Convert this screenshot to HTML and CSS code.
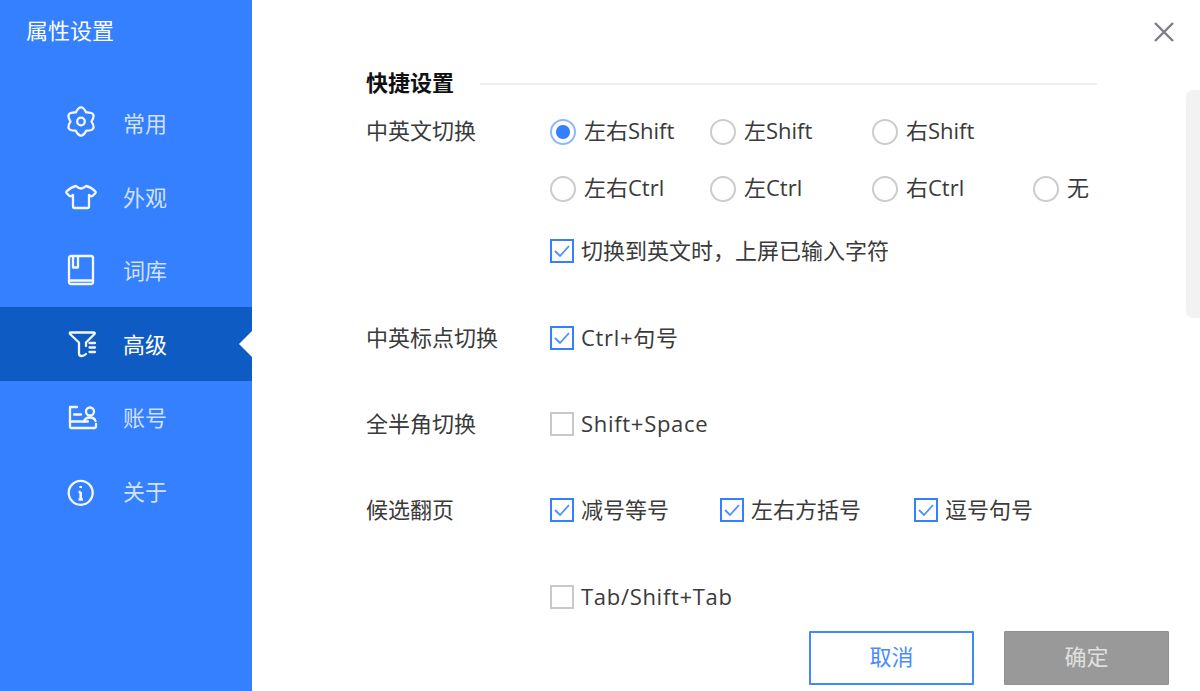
FILE: index.html
```html
<!DOCTYPE html>
<html lang="zh-CN">
<head>
<meta charset="utf-8">
<title>属性设置</title>
<link rel="stylesheet" href="styles.css">
</head>
<body>
<div class="window">
  <aside class="sidebar">
    <h1 class="app-title">属性设置</h1>
    <nav class="menu">
      <a class="menu-item">
        <svg class="menu-icon" viewBox="0 0 30 30"><path d="M9.750 4.400Q15 -5.500 20.250 4.400Q31.450 4 25.500 13.500Q31.450 23 20.250 22.600Q15 32.500 9.750 22.600Q-1.450 23 4.500 13.500Q-1.450 4 9.750 4.400Z"/><circle cx="15" cy="13.500" r="3.800"/></svg>
        <span>常用</span>
      </a>
      <a class="menu-item">
        <svg class="menu-icon" viewBox="0 0 30 30"><path d="M10 4Q15 9 20 4Q25 5 29.500 9.500Q30 10.500 29.500 11L26.500 14Q25.500 14.500 24.500 14L23 13V24.500Q23 26 21.500 26H8.500Q7 26 7 24.500V13L5.500 14Q4.500 14.500 3.500 14L.5 11Q0 10.500 .5 9.500Q5 5 10 4Z"/></svg>
        <span>外观</span>
      </a>
      <a class="menu-item">
        <svg class="menu-icon" viewBox="0 0 30 30"><rect x="3" y="1" width="24" height="28" rx="2"/><path d="M7 1.500V12.500H12V1.500M3 25.500H27"/></svg>
        <span>词库</span>
      </a>
      <a class="menu-item is-active">
        <svg class="menu-icon" viewBox="0 0 30 30"><path d="M5 3.500H27.500Q29.500 3.500 28.500 5L20 13.500V17M5 3.500Q3 3.500 4 5L13 13.500V24.500Q13 27 15.500 27Q18 27 20 25"/><path d="M23.500 14H29M23.500 18.500H29M23.500 23H29"/></svg>
        <span>高级</span>
      </a>
      <a class="menu-item">
        <svg class="menu-icon" viewBox="0 0 30 30"><path d="M11 5H4V25Q4 26 5 26H28.500Q30 26 30 24V22"/><path d="M8 12.500H15M4 19.500H22"/><circle cx="24" cy="9.500" r="4"/><path d="M18 19.500Q19 15.500 24 15.500Q28.500 15.500 29.500 19"/></svg>
        <span>账号</span>
      </a>
      <a class="menu-item">
        <svg class="menu-icon" viewBox="0 0 30 30"><circle cx="14.700" cy="16.800" r="12"/><path class="icon-bold" d="M14.700 16V23.500M12.500 16H14.700M12.500 23.500H16.900M14.700 10V12"/></svg>
        <span>关于</span>
      </a>
    </nav>
  </aside>

  <main class="content">
    <div class="section-head">
      <h2 class="section-title">快捷设置</h2>
      <div class="section-rule"></div>
    </div>

    <section class="setting setting-first">
      <div class="setting-label">中英文切换</div>
      <div class="setting-body">
        <div class="radio-grid">
          <label class="radio is-checked"><i class="radio-mark"></i>左右Shift</label>
          <label class="radio"><i class="radio-mark"></i>左Shift</label>
          <label class="radio"><i class="radio-mark"></i>右Shift</label>
          <span></span>
          <label class="radio"><i class="radio-mark"></i>左右Ctrl</label>
          <label class="radio"><i class="radio-mark"></i>左Ctrl</label>
          <label class="radio"><i class="radio-mark"></i>右Ctrl</label>
          <label class="radio"><i class="radio-mark"></i>无</label>
        </div>
        <div class="check-line check-line-sub">
          <label class="check"><svg class="check-box is-on" viewBox="0 0 20 20"><path d="M3 10l5 5 9-10"/></svg>切换到英文时，上屏已输入字符</label>
        </div>
      </div>
    </section>

    <section class="setting">
      <div class="setting-label">中英标点切换</div>
      <div class="setting-body">
        <div class="check-line">
          <label class="check check-latin"><svg class="check-box is-on" viewBox="0 0 20 20"><path d="M3 10l5 5 9-10"/></svg>Ctrl+句号</label>
        </div>
      </div>
    </section>

    <section class="setting">
      <div class="setting-label">全半角切换</div>
      <div class="setting-body">
        <div class="check-line">
          <label class="check check-latin"><svg class="check-box" viewBox="0 0 20 20"></svg>Shift+Space</label>
        </div>
      </div>
    </section>

    <section class="setting">
      <div class="setting-label">候选翻页</div>
      <div class="setting-body">
        <div class="check-line check-line-multi">
          <label class="check"><svg class="check-box is-on" viewBox="0 0 20 20"><path d="M3 10l5 5 9-10"/></svg>减号等号</label>
          <label class="check"><svg class="check-box is-on" viewBox="0 0 20 20"><path d="M3 10l5 5 9-10"/></svg>左右方括号</label>
          <label class="check"><svg class="check-box is-on" viewBox="0 0 20 20"><path d="M3 10l5 5 9-10"/></svg>逗号句号</label>
        </div>
        <div class="check-line check-line-next">
          <label class="check check-latin"><svg class="check-box" viewBox="0 0 20 20"></svg>Tab/Shift+Tab</label>
        </div>
      </div>
    </section>
  </main>

  <button class="close" type="button" aria-label="关闭">
    <svg viewBox="0 0 20 20"><path d="M1 1l18 18M19 1l-18 18"/></svg>
  </button>
  <div class="scrollbar"></div>
  <footer class="actions">
    <button class="btn btn-cancel" type="button">取消</button>
    <button class="btn btn-ok" type="button">确定</button>
  </footer>
</div>
</body>
</html>
```
FILE: styles.css
```css
* { box-sizing: border-box; }
html, body { margin: 0; height: 100%; }
body {
  font-family: "Open Sans", "Noto Sans CJK SC", sans-serif;
  font-size: 22px;
  color: #3a3a3a;
  background: #fff;
  overflow: hidden;
}
.window {
  position: relative;
  display: flex;
  width: 1200px;
  height: 691px;
  overflow: hidden;
}

/* sidebar */
.sidebar {
  flex: 0 0 252px;
  background: #3480ff;
  color: #fff;
}
.app-title {
  margin: 0;
  padding: 15px 0 0 26px;
  font-size: 22px;
  line-height: 30px;
  font-weight: 400;
}
.menu {
  display: flex;
  flex-direction: column;
  margin-top: 41.500px;
}
.menu-item {
  position: relative;
  display: flex;
  align-items: center;
  gap: 27px;
  height: 73.5px;
  padding-left: 66px;
  color: rgba(255, 255, 255, .78);
}
.menu-item span { line-height: 30px; }
.menu-icon {
  width: 30px;
  height: 30px;
  overflow: visible;
  fill: none;
  stroke: #fff;
  stroke-width: 2.300;
  stroke-linejoin: round;
  stroke-linecap: round;
  opacity: .95;
}
.icon-bold { stroke-width: 2.600; stroke-linecap: butt; }
.menu-item.is-active {
  background: #0f5bc4;
  color: #fff;
}
.menu-item.is-active::after {
  content: "";
  position: absolute;
  right: 0;
  top: 50%;
  margin-top: -13px;
  border-style: solid;
  border-width: 13px 13px 13px 0;
  border-color: transparent #fff transparent transparent;
}

/* content */
.content {
  flex: 1;
  min-width: 0;
  padding: 69px 103px 0 114px;
}
.section-head {
  display: flex;
  align-items: center;
  gap: 26px;
  height: 30px;
}
.section-title {
  margin: 0;
  padding-bottom: 4px;
  font-size: 22px;
  line-height: 26px;
  font-weight: 700;
  color: #111;
}
.section-rule {
  flex: 1;
  height: 2px;
  margin-top: -1px;
  background: #eeeeee;
}
.setting {
  display: grid;
  grid-template-columns: 184px 1fr;
  margin-top: 56px;
}
.setting-first { margin-top: 18px; }
.setting-first + .setting { margin-top: 57px; }
.setting-label { line-height: 28px; white-space: nowrap; }
.setting-first .setting-label { line-height: 26px; }
.radio-grid {
  display: grid;
  grid-template-columns: 160px 162px 161px auto;
  grid-auto-rows: 30px;
  row-gap: 27px;
}
.radio {
  display: flex;
  align-items: flex-start;
  gap: 8px;
  line-height: 26px;
  white-space: nowrap;
}
.radio-mark {
  flex: 0 0 26px;
  width: 26px;
  height: 26px;
  margin-top: 2px;
  border: 2px solid #cccccc;
  border-radius: 50%;
}
.is-checked .radio-mark {
  border-color: #8fb8ff;
  background: radial-gradient(circle, #3480ff 0 6.500px, #fff 7.500px);
}
.check-line {
  display: flex;
  height: 30px;
}
.check-line-sub { margin-top: 32px; }
.check-line-next { margin-top: 57px; }
.check-line-multi .check + .check { margin-left: 51px; }
.check-line-multi .check:last-child { margin-left: 53px; }
.check {
  display: flex;
  align-items: flex-start;
  gap: 7px;
  line-height: 28px;
  white-space: nowrap;
}
.check-latin { letter-spacing: .7px; }
.check-box {
  flex: 0 0 24px;
  width: 24px;
  height: 24px;
  margin-top: 3px;
  border: 2px solid #c9c9c9;
  background: #fff;
  fill: none;
  stroke: #4f90ff;
  stroke-width: 1.800;
}
.check-box.is-on { border-color: #3480ff; }

/* overlays */
.close {
  position: absolute;
  top: 22px;
  right: 26px;
  width: 20px;
  height: 20px;
  padding: 0;
  border: 0;
  background: none;
}
.close svg {
  display: block;
  width: 20px;
  height: 20px;
  fill: none;
  stroke: #7d7d85;
  stroke-width: 2.400;
}
.scrollbar {
  position: absolute;
  top: 90px;
  right: 0;
  width: 14px;
  height: 228px;
  border-radius: 7px 0 0 7px;
  background: #f2f2f2;
}
.actions {
  position: absolute;
  right: 31px;
  bottom: 6px;
  display: flex;
  gap: 30px;
  background: #fff;
}
.btn {
  width: 165px;
  height: 54px;
  padding: 0 0 4px;
  font-family: inherit;
  font-size: 22px;
  line-height: 26px;
  border-radius: 1px;
}
.btn-cancel {
  border: 2px solid #3f88ff;
  background: #fff;
  color: #4a8cff;
}
.btn-ok {
  border: 1px solid #8f8f8f;
  background: #999999;
  color: #e0e0e0;
}
```
